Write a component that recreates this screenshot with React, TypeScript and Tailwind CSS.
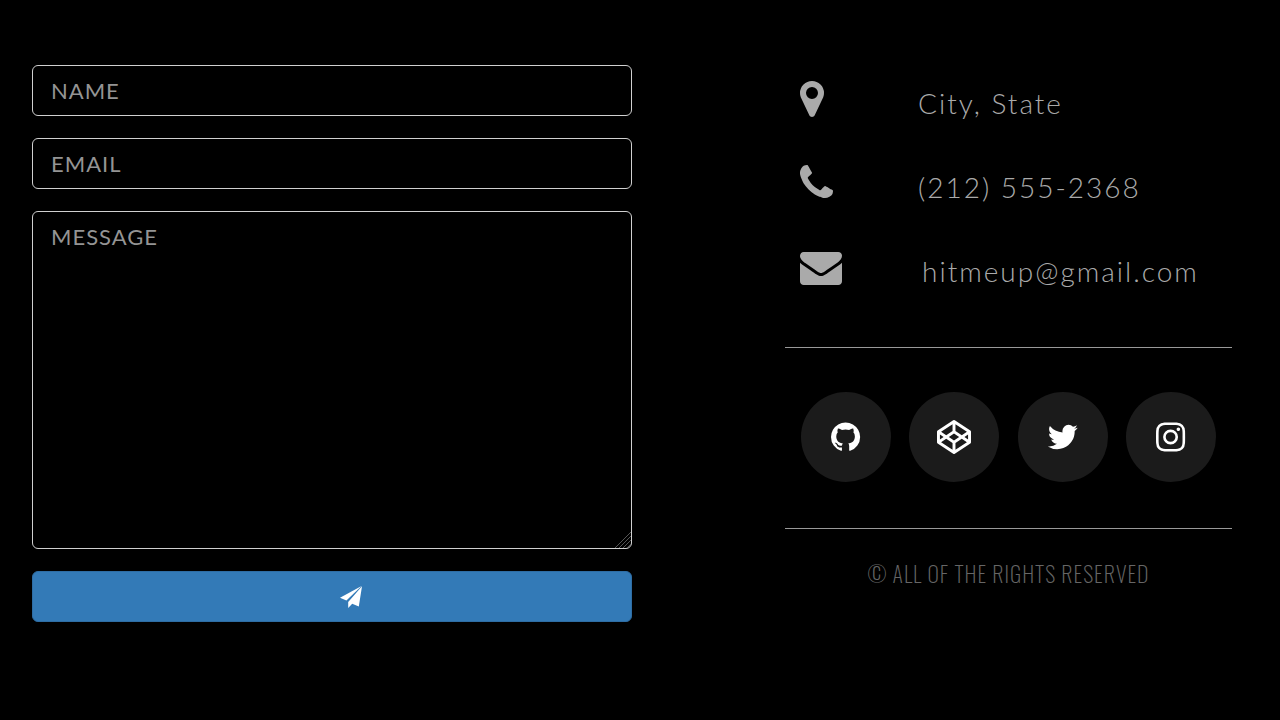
import { useState } from 'react';
import type { FormEvent } from 'react';

// Font glyph outlines: y axis points up, 1792 units per em, 1536 above the baseline
const glyphs = {
  marker: {
    width: 1024,
    d: 'M768 896q0 106 -75 181t-181 75t-181 -75t-75 -181t75 -181t181 -75t181 75t75 181zM1024 896q0 -109 -33 -179l-364 -774q-16 -33 -47.5 -52t-67.5 -19t-67.5 19t-46.5 52l-365 774q-33 70 -33 179q0 212 150 362t362 150t362 -150t150 -362z',
  },
  phone: {
    width: 1408,
    d: 'M1408 296q0 -27 -10 -70.5t-21 -68.5q-21 -50 -122 -106q-94 -51 -186 -51q-27 0 -53 3.5t-57.5 12.5t-47 14.5t-55.5 20.5t-49 18q-98 35 -175 83q-127 79 -264 216t-216 264q-48 77 -83 175q-3 9 -18 49t-20.5 55.5t-14.5 47t-12.5 57.5t-3.5 53q0 92 51 186q56 101 106 122q25 11 68.5 21t70.5 10q14 0 21 -3q18 -6 53 -76q11 -19 30 -54t35 -63.5t31 -53.5q3 -4 17.5 -25t21.5 -35.5t7 -28.5q0 -20 -28.5 -50t-62 -55t-62 -53t-28.5 -46q0 -9 5 -22.5t8.5 -20.5t14 -24t11.5 -19q76 -137 174 -235t235 -174q2 -1 19 -11.5t24 -14t20.5 -8.5t22.5 -5q18 0 46 28.5t53 62t55 62t50 28.5q14 0 28.5 -7t35.5 -21.5t25 -17.5q25 -15 53.5 -31t63.5 -35t54 -30q70 -35 76 -53q3 -7 3 -21z',
  },
  envelope: {
    width: 1792,
    d: 'M1792 826v-794q0 -66 -47 -113t-113 -47h-1472q-66 0 -113 47t-47 113v794q44 -49 101 -87q362 -246 497 -345q57 -42 92.5 -65.5t94.5 -48t110 -24.5h1h1q51 0 110 24.5t94.5 48t92.5 65.5q170 123 498 345q57 39 100 87zM1792 1120q0 -79 -49 -151t-122 -123q-376 -261 -468 -325q-10 -7 -42.5 -30.5t-54 -38t-52 -32.5t-57.5 -27t-50 -9h-1h-1q-23 0 -50 9t-57.5 27t-52 32.5t-54 38t-42.5 30.5q-91 64 -262 182.5t-205 142.5q-62 42 -117 115.5t-55 136.5q0 78 41.5 130t118.5 52h1472q65 0 112.5 -47t47.5 -113z',
  },
  github: {
    width: 1536,
    d: 'M768 1408q209 0 385.5 -103t279.5 -279.5t103 -385.5q0 -251 -146.5 -451.5t-378.5 -277.5q-27 -5 -40 7t-13 30q0 3 0.5 76.5t0.5 134.5q0 97 -52 142q57 6 102.5 18t94 39t81 66.5t53 105t20.5 150.5q0 119 -79 206q37 91 -8 204q-28 9 -81 -11t-92 -44l-38 -24q-93 26 -192 26t-192 -26q-16 11 -42.5 27t-83.5 38.5t-85 13.5q-45 -113 -8 -204q-79 -87 -79 -206q0 -85 20.5 -150t52.5 -105t80.5 -67t94 -39t102.5 -18q-39 -36 -49 -103q-21 -10 -45 -15t-57 -5t-65.5 21.5t-55.5 62.5q-19 32 -48.5 52t-49.5 24l-20 3q-21 0 -29 -4.5t-5 -11.5t9 -14t13 -12l7 -5q22 -10 43.5 -38t31.5 -51l10 -23q13 -38 44 -61.5t67 -30t69.5 -7t55.5 3.5l23 4q0 -38 0.5 -88.5t0.5 -54.5q0 -18 -13 -30t-40 -7q-232 77 -378.5 277.5t-146.5 451.5q0 209 103 385.5t279.5 279.5t385.5 103z',
  },
  codepen: {
    width: 1792,
    d: 'M216 367l603 -402v359l-334 223zM154 511l193 129l-193 129v-258zM973 -35l603 402l-269 180l-334 -223v-359zM896 458l272 182l-272 182l-272 -182zM485 733l334 223v359l-603 -402zM1445 640l193 -129v258zM1307 733l269 180l-603 402v-359zM1792 913v-546q0 -41 -34 -64l-819 -546q-21 -13 -43 -13t-43 13l-819 546q-34 23 -34 64v546q0 41 34 64l819 546q21 13 43 13t43 -13l819 -546q34 -23 34 -64z',
  },
  twitter: {
    width: 1664,
    d: 'M1620 1128q-67 -98 -162 -167q1 -14 1 -42q0 -130 -38 -259.5t-115.5 -248.5t-184.5 -210.5t-258 -146t-323 -54.5q-271 0 -496 145q35 -4 78 -4q225 0 401 138q-105 2 -188 64.5t-114 159.5q33 -5 61 -5q43 0 85 11q-112 23 -185.5 111.5t-73.5 205.5v4q68 -38 146 -41q-66 44 -105 115t-39 154q0 88 44 163q121 -149 294.5 -238.5t371.5 -99.5q-8 38 -8 74q0 134 94.5 228.5t228.5 94.5q140 0 236 -102q109 21 205 78q-37 -115 -142 -178q93 10 186 50z',
  },
  instagram: {
    width: 1536,
    d: 'M1024 640q0 106 -75 181t-181 75t-181 -75t-75 -181t75 -181t181 -75t181 75t75 181zM1162 640q0 -164 -115 -279t-279 -115t-279 115t-115 279t115 279t279 115t279 -115t115 -279zM1270 1050q0 -38 -27 -65t-65 -27t-65 27t-27 65t27 65t65 27t65 -27t27 -65zM768 1270q-7 0 -76.5 0.5t-105.5 0t-96.5 -3t-103 -10t-71.5 -18.5q-50 -20 -88 -58t-58 -88q-11 -29 -18.5 -71.5t-10 -103t-3 -96.5t0 -105.5t0.5 -76.5t-0.5 -76.5t0 -105.5t3 -96.5t10 -103t18.5 -71.5q20 -50 58 -88t88 -58q29 -11 71.5 -18.5t103 -10t96.5 -3t105.5 0t76.5 0.5t76.5 -0.5t105.5 0t96.5 3t103 10t71.5 18.5q50 20 88 58t58 88q11 29 18.5 71.5t10 103t3 96.5t0 105.5t-0.5 76.5t0.5 76.5t0 105.5t-3 96.5t-10 103t-18.5 71.5q-20 50 -58 88t-88 58q-29 11 -71.5 18.5t-103 10t-96.5 3t-105.5 0t-76.5 -0.5zM1536 640q0 -229 -5 -317q-10 -208 -124 -322t-322 -124q-88 -5 -317 -5t-317 5q-208 10 -322 124t-124 322q-5 88 -5 317t5 317q10 208 124 322t322 124q88 5 317 5t317 -5q208 -10 322 -124t124 -322q5 -88 5 -317z',
  },
};

type GlyphName = keyof typeof glyphs;

function Glyph({ name, className }: { name: GlyphName; className: string }) {
  const { width, d } = glyphs[name];
  return (
    <svg viewBox={`0 0 ${width} 1792`} className={`w-auto overflow-visible ${className}`} fill="currentColor" aria-hidden="true">
      <path transform="translate(0 1536) scale(1 -1)" d={d} />
    </svg>
  );
}

const contacts: { icon: GlyphName; text: string; href?: string }[] = [
  { icon: 'marker', text: 'City, State' },
  { icon: 'phone', text: '(212) 555-2368', href: 'tel:2125552368' },
  { icon: 'envelope', text: 'hitmeup@gmail.com', href: 'mailto:hitmeup@gmail.com' },
];

const socials: { icon: GlyphName; label: string }[] = [
  { icon: 'github', label: 'GitHub' },
  { icon: 'codepen', label: 'CodePen' },
  { icon: 'twitter', label: 'Twitter' },
  { icon: 'instagram', label: 'Instagram' },
];

const fieldClass =
  'block w-full rounded-md border border-[#d0d0d0] bg-black px-[18px] text-[22px] tracking-[1px] text-white placeholder:text-[#949494] outline-none focus:border-[#337ab7]';

function ContactForm() {
  const [form, setForm] = useState({ name: '', email: '', message: '' });
  const send = (e: FormEvent) => {
    e.preventDefault();
    setForm({ name: '', email: '', message: '' });
  };

  return (
    <form onSubmit={send} className="flex flex-col gap-[22px]">
      <input type="text" aria-label="Name" placeholder="NAME" value={form.name} onChange={(e) => setForm({ ...form, name: e.target.value })} className={`${fieldClass} h-[51px]`} />
      <input type="email" aria-label="Email" placeholder="EMAIL" value={form.email} onChange={(e) => setForm({ ...form, email: e.target.value })} className={`${fieldClass} h-[51px]`} />
      <div className="relative">
        <textarea
          aria-label="Message"
          placeholder="MESSAGE"
          value={form.message}
          onChange={(e) => setForm({ ...form, message: e.target.value })}
          className={`${fieldClass} h-[338px] resize-y py-2.5 leading-[30px] [&::-webkit-resizer]:bg-transparent`}
        />
        <svg viewBox="0 0 16 16" className="pointer-events-none absolute right-px bottom-px size-4" stroke="#6b6b6b" strokeWidth="0.8" aria-hidden="true">
          <path d="M0 16L16 0M4 16L16 4M8 16L16 8M12 16L16 12" />
        </svg>
      </div>
      <button type="submit" aria-label="Send" className="flex h-[51px] items-center justify-center rounded-md border border-[#2e6da4] bg-[#337ab7] pl-[38px] text-white">
        <svg viewBox="0 0 22 22" className="size-[22px]" fill="currentColor" aria-hidden="true">
          <path d="M0 11.8L21.6 0L6.4 14.6Z" />
          <path d="M22 0.3L18.8 20.4L12.2 17.8L8.2 22V16Z" />
        </svg>
      </button>
    </form>
  );
}

export default function App() {
  return (
    <main className="grid min-h-screen grid-cols-[600fr_447fr] items-start gap-[153px] bg-black pt-[65px] pr-12 pb-8 pl-8 font-['Lato',sans-serif]">
      <ContactForm />
      <section className="pt-[13px]">
        <ul className="flex flex-col gap-[34px] pl-[15px] text-[#aaa]">
          {contacts.map(({ icon, text, href }) => (
            <li key={icon} className="flex items-start gap-20">
              <span className="min-w-[38px]">
                <Glyph name={icon} className="h-[42px]" />
              </span>
              <span className="text-[28px] leading-[50px] font-light tracking-[2px] whitespace-nowrap">
                {href ? <a href={href}>{text}</a> : text}
              </span>
            </li>
          ))}
        </ul>
        <hr className="mt-[51px] border-[#999]" />
        <ul className="mt-11 flex justify-between px-4">
          {socials.map(({ icon, label }) => (
            <li key={icon}>
              <a href="#" aria-label={label} className="flex size-[90px] items-center justify-center rounded-full bg-[#1b1b1b] text-white">
                <Glyph name={icon} className="h-[34px]" />
              </a>
            </li>
          ))}
        </ul>
        <hr className="mt-[46px] border-[#999]" />
        <p className="mt-7 text-center font-['Oswald',sans-serif] text-[22px] leading-8 font-extralight tracking-[1px] text-[#666]">
          © ALL OF THE RIGHTS RESERVED
        </p>
      </section>
    </main>
  );
}
